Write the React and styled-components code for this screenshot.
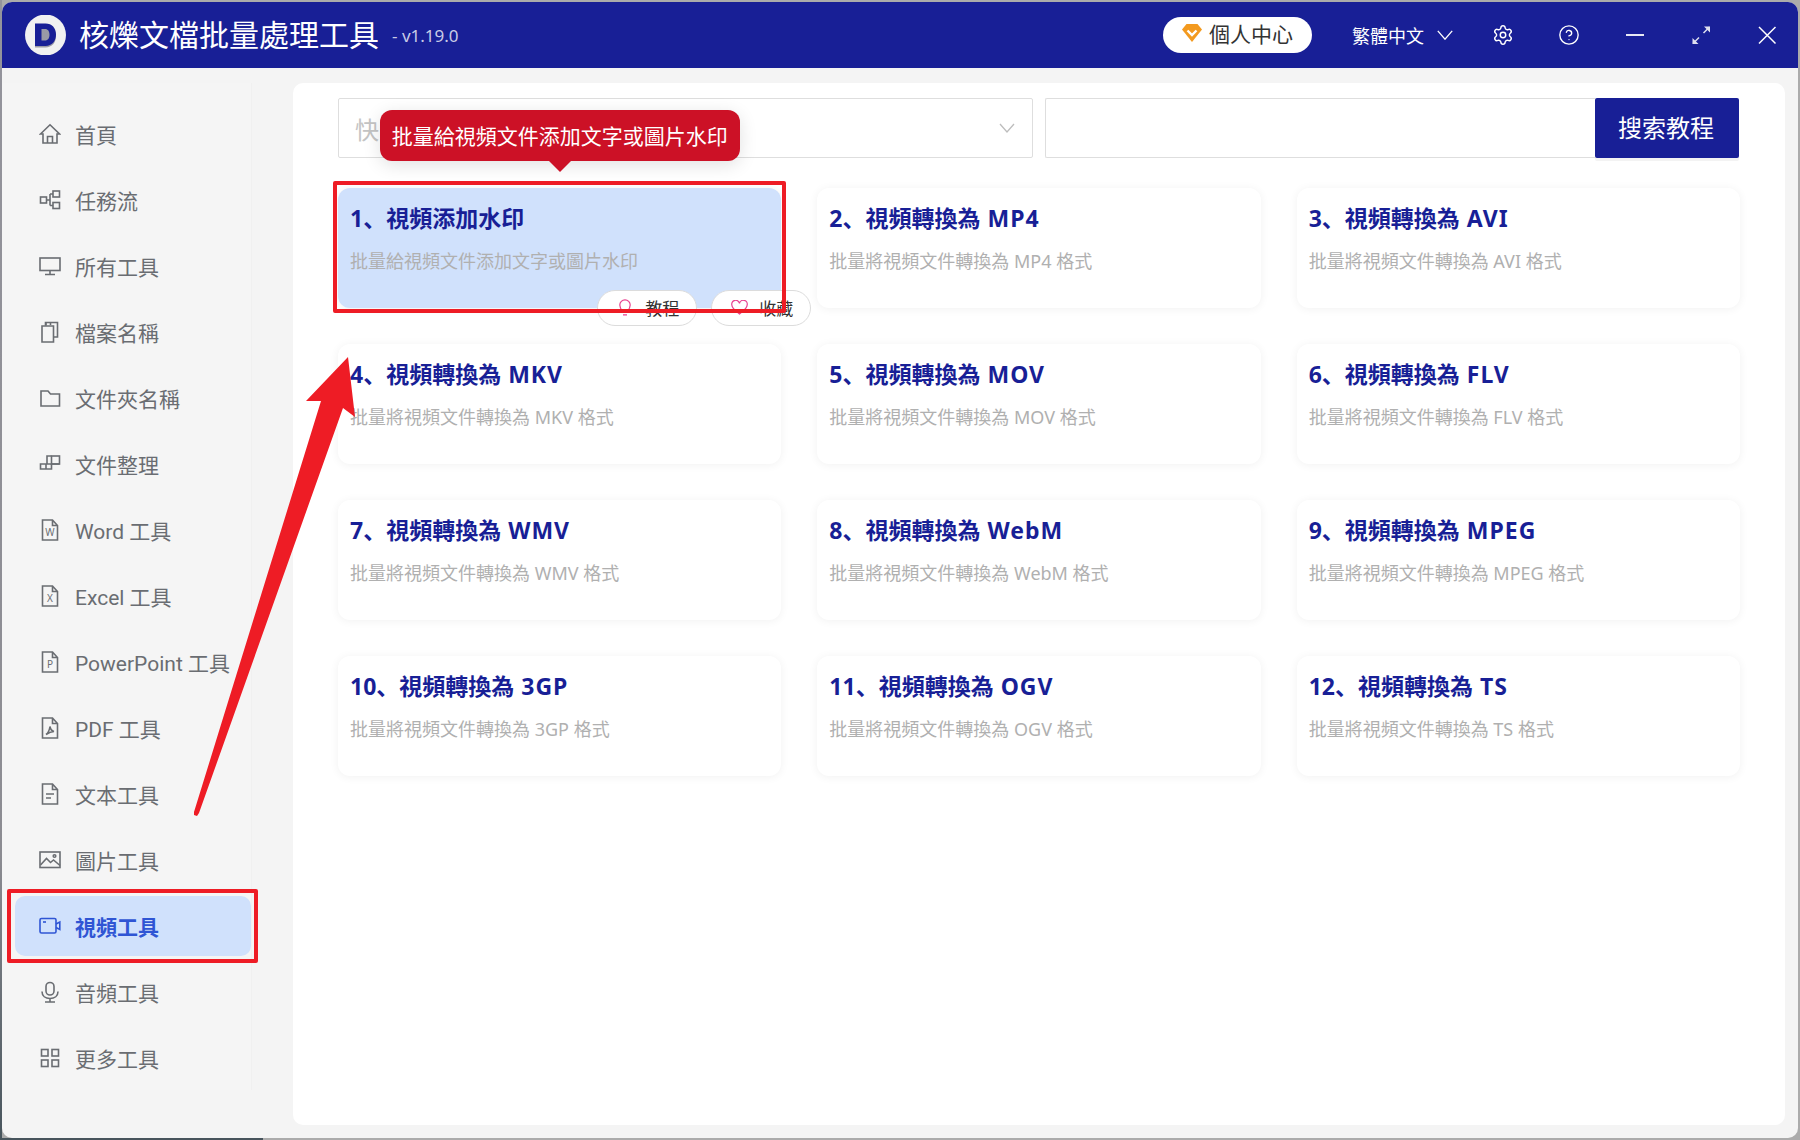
import React from "react";
import styled, { createGlobalStyle } from "styled-components";
import { Settings, CircleHelp } from "lucide-react";

const GlobalStyle = createGlobalStyle`
  html, body {
    margin: 0;
    padding: 0;
  }
  body {
    font-family: "Noto Sans", "Noto Sans CJK SC", "Noto Sans CJK TC", sans-serif;
  }
  * {
    box-sizing: border-box;
  }
`;

const navIcons = {
  home: (
    <>
      <path d="M1.5 11 11 1.8 20.5 11H18v9H4v-9z" />
      <path d="M8.5 20v-6.5h5V20" />
    </>
  ),
  flow: (
    <>
      <rect x="1.5" y="8" width="6" height="6" />
      <rect x="14" y="2" width="6.5" height="6" />
      <rect x="14" y="13.5" width="6.5" height="6" />
      <path d="M7.5 11H11M11 5v11.5M11 5h3M11 16.5h3" />
    </>
  ),
  screen: (
    <>
      <rect x="1" y="3" width="20" height="12.5" />
      <path d="M11 15.5V19M6 19.5h10" />
    </>
  ),
  files: (
    <>
      <path d="M3 5h11.5v16H3z" />
      <path d="M6.5 4.5V1.5h5v2.5M11.5 1.5h7V16h-4" />
      <path d="M7 1.5v3" />
    </>
  ),
  folder: <path d="M2 4h7l2.500 3H20.500v12H2z" />,
  cluster: (
    <>
      <rect x="12.500" y="3" width="8" height="8" />
      <path d="M7 11h13.500M12.500 11v5H1.500v-5H12.500M7 11v5" />
      <path d="M12.500 3H8v8" />
    </>
  ),
  image: (
    <>
      <rect x="1" y="3" width="20" height="15.500" />
      <path d="M1.500 16 7.500 9.500l4 4 3-2.500 6.500 5.500" />
      <circle cx="15.500" cy="7" r="1.300" />
    </>
  ),
  video: (
    <>
      <rect x="1" y="3.500" width="16" height="14.500" rx="1.500" />
      <path d="M17 9l3.800-2v7.500L17 12.500" />
      <path d="M4 7h3" />
    </>
  ),
  mic: (
    <>
      <rect x="7" y="1.500" width="8" height="12.500" rx="4" />
      <path d="M3 10.500c0 4.500 3.500 7 8 7s8-2.500 8-7M11 17.500v3.500M6 21h10" />
    </>
  ),
  grid: (
    <>
      <rect x="2.500" y="2.500" width="6.500" height="6.500" />
      <rect x="13" y="2.500" width="6.500" height="6.500" />
      <rect x="2.500" y="13" width="6.500" height="6.500" />
      <rect x="13" y="13" width="6.500" height="6.500" />
    </>
  ),
};

const docShape = "M3.500 1H13.500L18.500 6.500V21H3.500zM13.500 1V6.500H18.500";

const navItems = [
  { label: "首頁", icon: navIcons.home },
  { label: "任務流", icon: navIcons.flow },
  { label: "所有工具", icon: navIcons.screen },
  { label: "檔案名稱", icon: navIcons.files },
  { label: "文件夾名稱", icon: navIcons.folder },
  { label: "文件整理", icon: navIcons.cluster },
  { label: "Word 工具", doc: "W" },
  { label: "Excel 工具", doc: "X" },
  { label: "PowerPoint 工具", doc: "P" },
  { label: "PDF 工具", docPath: "M7 17.500c2-1.500 3.500-4.500 4-8 .5 3 2 4.500 4 5-2.500 0-5 1-8 3z" },
  { label: "文本工具", docPath: "M7 11h8M7 15h5" },
  { label: "圖片工具", icon: navIcons.image },
  { label: "視頻工具", icon: navIcons.video, active: true },
  { label: "音頻工具", icon: navIcons.mic },
  { label: "更多工具", icon: navIcons.grid },
];

const tools = [
  { title: "視頻添加水印", desc: "批量給視頻文件添加文字或圖片水印", active: true },
  { title: "視頻轉換為", ext: "MP4", desc: "批量將視頻文件轉換為 MP4 格式" },
  { title: "視頻轉換為", ext: "AVI", desc: "批量將視頻文件轉換為 AVI 格式" },
  { title: "視頻轉換為", ext: "MKV", desc: "批量將視頻文件轉換為 MKV 格式" },
  { title: "視頻轉換為", ext: "MOV", desc: "批量將視頻文件轉換為 MOV 格式" },
  { title: "視頻轉換為", ext: "FLV", desc: "批量將視頻文件轉換為 FLV 格式" },
  { title: "視頻轉換為", ext: "WMV", desc: "批量將視頻文件轉換為 WMV 格式" },
  { title: "視頻轉換為", ext: "WebM", desc: "批量將視頻文件轉換為 WebM 格式" },
  { title: "視頻轉換為", ext: "MPEG", desc: "批量將視頻文件轉換為 MPEG 格式" },
  { title: "視頻轉換為", ext: "3GP", desc: "批量將視頻文件轉換為 3GP 格式" },
  { title: "視頻轉換為", ext: "OGV", desc: "批量將視頻文件轉換為 OGV 格式" },
  { title: "視頻轉換為", ext: "TS", desc: "批量將視頻文件轉換為 TS 格式" },
];

function NavIcon({ item }) {
  return (
    <NavGlyph viewBox="0 0 22 22">
      {item.icon}
      {(item.doc || item.docPath) && <path d={docShape} />}
      {item.docPath && <path d={item.docPath} />}
      {item.doc && (
        <DocLetter x="11" y="16.500" textAnchor="middle">
          {item.doc}
        </DocLetter>
      )}
    </NavGlyph>
  );
}

function App() {
  return (
    <Page>
      <GlobalStyle />
      <Window>
        <TopBar>
          <Logo viewBox="0 0 41 40">
            <circle cx="20.500" cy="20" r="20.500" fill="#f1f1f1" />
            <path
              d="M10 10h10.500c6.500 0 10.500 4.500 10.500 11s-4 11.500-10.500 11.500H10z"
              fill="#9a9aa6"
            />
            <path
              fillRule="evenodd"
              d="M10 8.500h10.500c6.500 0 10.500 4.500 10.500 11s-4 11.500-10.500 11.500H10zM16.500 14v11.500h3.500c3 0 4.500-2.500 4.500-5.800S23 14 20 14z"
              fill="#181f96"
            />
          </Logo>
          <AppTitle>核爍文檔批量處理工具</AppTitle>
          <Version>- v1.19.0</Version>
          <TopActions>
            <UserPill>
              <svg width="20" height="18" viewBox="0 0 20 18">
                <path d="M4.500 0h11L20 5.500 10 18 0 5.500z" fill="#f39a1f" />
                <path d="M5.500 6.500 10 11l4.500-4.500" fill="none" stroke="#fff" strokeWidth="2.400" />
              </svg>
              個人中心
            </UserPill>
            <LangSwitch>
              繁體中文
              <svg width="16" height="10" viewBox="0 0 16 10">
                <path d="M.8.800 8 9.200 15.200.800" fill="none" stroke="#fff" strokeWidth="1.300" />
              </svg>
            </LangSwitch>
            <WindowIcons>
              <Settings size={22} strokeWidth={1.6} />
              <CircleHelp size={22} strokeWidth={1.5} />
              <svg width="22" height="22" viewBox="0 0 22 22">
                <path d="M2 11h18" stroke="#fff" strokeWidth="1.800" />
              </svg>
              <svg width="22" height="22" viewBox="0 0 22 22">
                <path d="M3 19.500 9 13.500M13.500 9l6-6" stroke="#dfe0ef" strokeWidth="1.500" fill="none" />
                <path d="M2.500 14v6h6zM20 2.500h-6l6 6z" fill="#dfe0ef" />
              </svg>
              <svg width="22" height="22" viewBox="0 0 22 22">
                <path d="M3 3l16.500 16.500M19.500 3 3 19.500" stroke="#fff" strokeWidth="1.500" />
              </svg>
            </WindowIcons>
          </TopActions>
        </TopBar>
        <Body>
          <SideColumn>
            <SideNav>
              {navItems.map((item) => (
                <NavItem key={item.label} $active={item.active}>
                  <NavIcon item={item} />
                  {item.label}
                  {item.active && <SideFrame />}
                </NavItem>
              ))}
            </SideNav>
          </SideColumn>
          <MainPanel>
            <SearchRow>
              <QuickSelect>
                快
                <svg width="16" height="10" viewBox="0 0 16 10">
                  <path d="M1 1l7 8 7-8" fill="none" stroke="#bdbdbd" strokeWidth="1.300" />
                </svg>
              </QuickSelect>
              <SearchInput />
              <SearchButton>搜索教程</SearchButton>
            </SearchRow>
            <ToolGrid>
              {tools.map((tool, index) => (
                <ToolCard key={tool.desc} $active={tool.active}>
                  <ToolTitle>
                    {index + 1}、{tool.title}
                    {tool.ext && <TitleExt> {tool.ext}</TitleExt>}
                  </ToolTitle>
                  <ToolDesc>{tool.desc}</ToolDesc>
                  {tool.active && (
                    <>
                      <Tip>{tool.desc}</Tip>
                      <CardActions>
                        <CardAction>
                          <ActionIcon>
                            <svg width="12" height="17" viewBox="0 0 12 17">
                              <path
                                d="M3.500 12.500C2 10.500.8 8.500.8 6a5.200 5.200 0 0 1 10.400 0c0 2.500-1.200 4.500-2.700 6.500zM4 15.800h4"
                                fill="#fff"
                                stroke="#e8408f"
                                strokeWidth="1.200"
                              />
                            </svg>
                          </ActionIcon>
                          教程
                        </CardAction>
                        <CardAction>
                          <ActionIcon>
                            <svg width="17" height="15" viewBox="0 0 17 15">
                              <path
                                d="M8.500 14C5 11 .8 8.500.8 4.800A3.900 3.900 0 0 1 8.500 3.500a3.900 3.900 0 0 1 7.700 1.300C16.200 8.500 12 11 8.500 14z"
                                fill="#fff"
                                stroke="#e8408f"
                                strokeWidth="1.200"
                              />
                            </svg>
                          </ActionIcon>
                          收藏
                        </CardAction>
                      </CardActions>
                      <CardFrame />
                    </>
                  )}
                </ToolCard>
              ))}
            </ToolGrid>
          </MainPanel>
        </Body>
      </Window>
      <Annotation viewBox="0 0 1800 1140">
        <polygon
          points="348,357 355,417 343,408 199,813 197,816 194,815 194,812 321,401 306,401"
          fill="#ee1c25"
        />
      </Annotation>
    </Page>
  );
}

export default App;

const Page = styled.div`
  position: relative;
  width: 1800px;
  height: 1140px;
  padding: 2px;
  overflow: hidden;
  background:
    linear-gradient(#47545c, #47545c) 0 100% / 263px 2px no-repeat,
    linear-gradient(#94949c 0%, #8c8c92 75%, #47545c 100%) 0 0 / 2px 100% no-repeat,
    #ababab;
`;

const Window = styled.div`
  display: flex;
  flex-direction: column;
  height: 100%;
  background-color: #f4f4f4;
  border-radius: 10px;
`;

const TopBar = styled.header`
  display: flex;
  align-items: center;
  height: 66px;
  flex-shrink: 0;
  padding: 0 20px 0 23px;
  background-color: #181f96;
  border-radius: 10px 10px 0 0;
  color: #fff;
`;

const Logo = styled.svg`
  width: 41px;
  height: 40px;
  margin-right: 13px;
`;

const AppTitle = styled.h1`
  margin: 0;
  font-size: 30px;
  font-weight: 400;
  line-height: 40px;
`;

const Version = styled.span`
  margin: 1px 0 0 13px;
  font-size: 17px;
  color: #c9cbe6;
`;

const TopActions = styled.div`
  display: flex;
  align-items: center;
  margin-left: auto;
`;

const UserPill = styled.div`
  display: flex;
  align-items: center;
  gap: 7px;
  width: 149px;
  height: 36px;
  padding: 0 0 4px 19px;
  border-radius: 18px;
  background-color: #fff;
  color: #333;
  font-size: 21px;
`;

const LangSwitch = styled.div`
  display: flex;
  align-items: center;
  gap: 13px;
  margin: 0 39px 0 40px;
  font-size: 18px;
`;

const WindowIcons = styled.div`
  display: flex;
  align-items: center;
  gap: 44px;
  color: #fff;
`;

const Body = styled.div`
  display: flex;
  flex: 1;
  min-height: 0;
  padding: 15px 13px 13px 0;
`;

const SideColumn = styled.aside`
  width: 291px;
  flex-shrink: 0;
`;

const SideNav = styled.nav`
  display: flex;
  flex-direction: column;
  gap: 6px;
  width: 250px;
  height: 1007px;
  padding: 21px 0 0 13px;
  border-right: 1px solid #f0f0f0;
  background-color: #f5f5f5;
`;

const NavItem = styled.div`
  position: relative;
  display: flex;
  align-items: center;
  gap: 14px;
  height: 60px;
  padding-left: 24px;
  border-radius: 10px;
  font-family: Roboto, "Noto Sans CJK SC", "Noto Sans CJK TC", sans-serif;
  font-size: 21px;
  white-space: nowrap;
  font-weight: ${(p) => (p.$active ? 700 : 400)};
  color: ${(p) => (p.$active ? "#2f55d4" : "#6a6d72")};
  background-color: ${(p) => (p.$active ? "#d0e1fc" : "transparent")};
`;

const NavGlyph = styled.svg`
  width: 22px;
  height: 22px;
  flex-shrink: 0;
  fill: none;
  stroke: currentColor;
  stroke-width: 1.6;
`;

const DocLetter = styled.text`
  font-size: 10px;
  fill: currentColor;
  stroke: none;
  font-family: "Noto Sans", sans-serif;
`;

const SideFrame = styled.span`
  position: absolute;
  top: -7px;
  right: -7px;
  bottom: -7px;
  left: -8px;
  border: 4px solid #ee1c25;
  border-radius: 2px;
`;

const MainPanel = styled.main`
  flex: 1;
  padding: 15px 45px 0 45px;
  border-radius: 10px;
  background-color: #fff;
`;

const SearchRow = styled.div`
  display: flex;
  height: 60px;
`;

const QuickSelect = styled.div`
  display: flex;
  align-items: center;
  justify-content: space-between;
  width: 695px;
  margin-right: 12px;
  padding: 0 17px 0 16px;
  border: 1.500px solid #dedede;
  border-radius: 2px;
  color: #c4c4c4;
  font-size: 24px;
`;

const SearchInput = styled.div`
  flex: 1;
  border: 1.500px solid #dedede;
  border-right: none;
  border-radius: 2px 0 0 2px;
`;

const SearchButton = styled.button`
  width: 144px;
  margin-right: 1px;
  padding: 0 2px 3px 0;
  border: none;
  border-radius: 2px;
  background-color: #181f96;
  color: #fff;
  font-family: inherit;
  font-size: 24px;
  box-shadow: 0 3px 0 #f3f3f3;
`;

const ToolGrid = styled.div`
  display: grid;
  grid-template-columns: repeat(3, 1fr);
  grid-auto-rows: 120px;
  gap: 36px;
  margin-top: 30px;
`;

const ToolCard = styled.div`
  position: relative;
  padding: 15px 12px;
  border-radius: 12px;
  background-color: ${(p) => (p.$active ? "#d0e1fc" : "#fff")};
  box-shadow: 0 1px 10px rgba(0, 0, 0, 0.06);
`;

const ToolTitle = styled.div`
  font-size: 23px;
  font-weight: 700;
  line-height: 30px;
  color: #181f96;
`;

const TitleExt = styled.span`
  letter-spacing: 1px;
`;

const ToolDesc = styled.div`
  margin-top: 16px;
  font-size: 18px;
  line-height: 24px;
  color: #b0b0b0;
`;

const Tip = styled.div`
  position: absolute;
  left: 50%;
  bottom: calc(100% + 27px);
  transform: translateX(-50%);
  width: 360px;
  height: 51px;
  border-radius: 12px;
  background-color: #cc1126;
  color: #fff;
  font-size: 21px;
  line-height: 53px;
  text-align: center;
  white-space: nowrap;
  box-shadow: 0 4px 18px rgba(0, 0, 0, 0.12);

  &::after {
    content: "";
    position: absolute;
    top: 100%;
    left: 50%;
    margin-left: -11px;
    border: 11px solid transparent;
    border-bottom: none;
    border-top-color: #cc1126;
  }
`;

const CardActions = styled.div`
  position: absolute;
  right: -30px;
  bottom: -18px;
  display: flex;
  gap: 14px;
`;

const CardAction = styled.div`
  display: flex;
  align-items: center;
  gap: 8px;
  width: 100px;
  height: 36px;
  padding: 0 0 2px 15px;
  border: 1px solid #dcdcdc;
  border-radius: 18px;
  background-color: #fff;
  color: #333;
  font-size: 17px;
`;

const ActionIcon = styled.span`
  display: flex;
  justify-content: center;
  width: 24px;
`;

const CardFrame = styled.span`
  position: absolute;
  top: -7px;
  right: -5px;
  bottom: -5px;
  left: -5px;
  border: 4px solid #ee1c25;
  border-radius: 2px;
`;

const Annotation = styled.svg`
  position: absolute;
  top: 0;
  left: 0;
  width: 1800px;
  height: 1140px;
  pointer-events: none;
`;
